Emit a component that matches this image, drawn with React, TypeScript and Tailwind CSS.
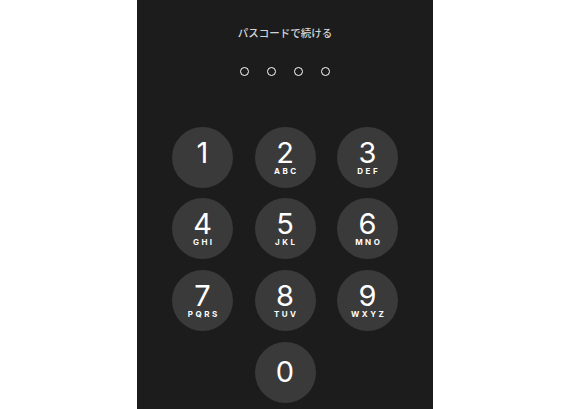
const keys = [
  { n: '1', l: '' },
  { n: '2', l: 'ABC' },
  { n: '3', l: 'DEF' },
  { n: '4', l: 'GHI' },
  { n: '5', l: 'JKL' },
  { n: '6', l: 'MNO' },
  { n: '7', l: 'PQRS' },
  { n: '8', l: 'TUV' },
  { n: '9', l: 'WXYZ' },
]

function Key({ n, l }: { n: string; l: string }) {
  return (
    <button className="w-[61px] h-[61px] rounded-full bg-[#3a3a3a] flex flex-col items-center pt-[13px] text-white">
      <span className="text-[29px] leading-[26px] font-normal">{n}</span>
      <span className="mt-[1px] text-[8px] leading-[8px] font-bold tracking-[2.5px] pl-[2.5px] h-[8px]">{l}</span>
    </button>
  )
}

export default function App() {
  return (
    <div className="w-full h-screen bg-white flex justify-center" style={{ fontFamily: 'Inter, "Noto Sans CJK JP", sans-serif' }}>
      <div className="w-[296px] h-full bg-[#1c1c1c] flex flex-col items-center">
        {/* Title */}
        <p
          className="mt-[28px] text-[10.5px] leading-[10px] font-medium text-[#d4d4d4]"
          style={{ fontFamily: '"Noto Sans CJK JP", sans-serif' }}
        >
          パスコードで続ける
        </p>

        {/* Dots */}
        <div className="mt-[29px] flex gap-[18.5px]">
          {[0, 1, 2, 3].map((i) => (
            <span key={i} className="w-[8.5px] h-[8.5px] rounded-full border-[1.5px] border-white" />
          ))}
        </div>

        {/* Keypad */}
        <div className="mt-[51px] grid grid-cols-[61px_61px_61px] gap-x-[21.5px] gap-y-[10.7px]">
          {keys.map((k) => (
            <Key key={k.n} n={k.n} l={k.l} />
          ))}
          <div />
          <button className="w-[61px] h-[61px] rounded-full bg-[#3a3a3a] flex items-center justify-center text-white">
            <span className="text-[29px] leading-[28px] font-normal">0</span>
          </button>
        </div>
      </div>
    </div>
  )
}
